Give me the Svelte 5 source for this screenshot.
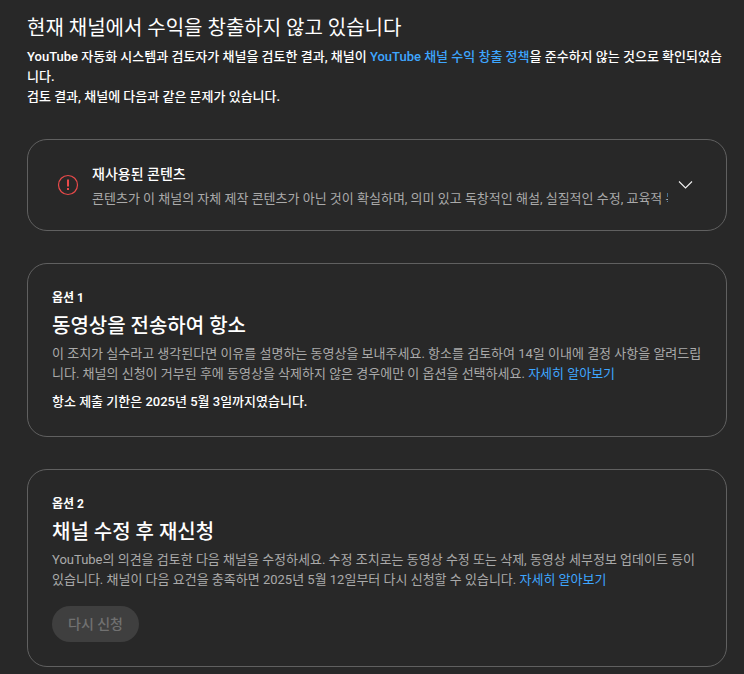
<script>
	const issue = {
		title: '재사용된 콘텐츠',
		text: '콘텐츠가 이 채널의 자체 제작 콘텐츠가 아닌 것이 확실하며, 의미 있고 독창적인 해설, 실질적인 수정, 교육적 목적이 추가되지 않은 콘텐츠입니다.'
	};
</script>

<div class="page">
	<header class="intro">
		<h1>현재 채널에서 수익을 창출하지 않고 있습니다</h1>
		<p>
			YouTube 자동화 시스템과 검토자가 채널을 검토한 결과, 채널이 <a href="#policy">YouTube 채널 수익 창출 정책</a>을 준수하지 않는 것으로 확인되었습니다.<br />
			검토 결과, 채널에 다음과 같은 문제가 있습니다.
		</p>
	</header>

	<section class="card issue">
		<svg class="alert" width="22" height="22" viewBox="0 0 22 22" aria-hidden="true">
			<circle cx="11" cy="11" r="9.5" fill="none" stroke="#e94a4a" stroke-width="1.2" />
			<rect x="10" y="5.5" width="2" height="7" fill="#e94a4a" />
			<rect x="10" y="14" width="2" height="2" fill="#e94a4a" />
		</svg>
		<div class="issue-body">
			<h3>{issue.title}</h3>
			<div class="issue-text">{issue.text}</div>
		</div>
		<svg class="chevron" width="16" height="16" viewBox="0 0 16 16" aria-hidden="true">
			<path d="M1 4.5 7.5 11 14 4.5" fill="none" stroke="#f1f1f1" stroke-width="1.1" />
		</svg>
	</section>

	<section class="card option">
		<div class="label">옵션 1</div>
		<h2>동영상을 전송하여 항소</h2>
		<p class="desc">
			이 조치가 실수라고 생각된다면 이유를 설명하는 동영상을 보내주세요. 항소를 검토하여 14일 이내에 결정 사항을 알려드립니다. 채널의 신청이 거부된 후에 동영상을 삭제하지 않은 경우에만 이 옵션을 선택하세요. <a href="#more">자세히 알아보기</a>
		</p>
		<p class="deadline">항소 제출 기한은 2025년 5월 3일까지였습니다.</p>
	</section>

	<section class="card option">
		<div class="label">옵션 2</div>
		<h2>채널 수정 후 재신청</h2>
		<p class="desc">
			YouTube의 의견을 검토한 다음 채널을 수정하세요. 수정 조치로는 동영상 수정 또는 삭제, 동영상 세부정보 업데이트 등이 있습니다. 채널이 다음 요건을 충족하면 2025년 5월 12일부터 다시 신청할 수 있습니다. <a href="#more">자세히 알아보기</a>
		</p>
		<button type="button" disabled>다시 신청</button>
	</section>
</div>

<style>
	:global(body) {
		background: #282828;
	}

	.page {
		height: 674px;
		overflow: hidden;
		box-sizing: border-box;
		padding: 14px 17px 0 27px;
		background: #282828;
		color: #fff;
		font-family: Roboto, "Noto Sans CJK KR", sans-serif;
	}

	h1 {
		margin: 0;
		font-size: 20px;
		line-height: 28px;
		font-weight: 400;
	}

	.intro p {
		margin: 5px 0 0;
		font-size: 13px;
		line-height: 20px;
		font-weight: 500;
	}

	a {
		color: #3ea6ff;
		text-decoration: none;
	}

	.card {
		box-sizing: border-box;
		width: 700px;
		border: 1px solid #606060;
		border-radius: 20px;
		margin-top: 32px;
	}

	.issue {
		display: flex;
		align-items: center;
		height: 92px;
		padding: 0 32px 0 29px;
	}

	.alert {
		flex: none;
		margin-right: 13px;
	}

	.issue-body {
		flex: 1;
		min-width: 0;
		padding-top: 2px;
	}

	h3 {
		margin: 0;
		font-size: 14px;
		line-height: 20px;
		font-weight: 500;
	}

	.issue-text {
		margin-top: 5px;
		font-size: 13px;
		line-height: 20px;
		color: #aaa;
		white-space: nowrap;
		overflow: hidden;
		width: 576px;
	}

	.chevron {
		flex: none;
	}

	.option {
		padding: 24px 24px 0;
	}

	.option:nth-of-type(2) {
		height: 174px;
	}

	.option:nth-of-type(3) {
		height: 198px;
	}

	.label {
		font-size: 12px;
		line-height: 20px;
		font-weight: 700;
	}

	h2 {
		margin: 4px 0 0;
		font-size: 20px;
		line-height: 28px;
		font-weight: 500;
	}

	.desc {
		margin: 4px 0 0;
		font-size: 13px;
		line-height: 20px;
		color: #aaa;
	}

	.deadline {
		margin: 8px 0 0;
		font-size: 13px;
		line-height: 20px;
		font-weight: 500;
	}

	button {
		display: block;
		margin-top: 16px;
		width: 87px;
		height: 36px;
		border: 0;
		border-radius: 18px;
		padding: 0;
		background: #3f3f3f;
		color: #717171;
		font: 500 14px/36px Roboto, "Noto Sans CJK KR", sans-serif;
	}
</style>
